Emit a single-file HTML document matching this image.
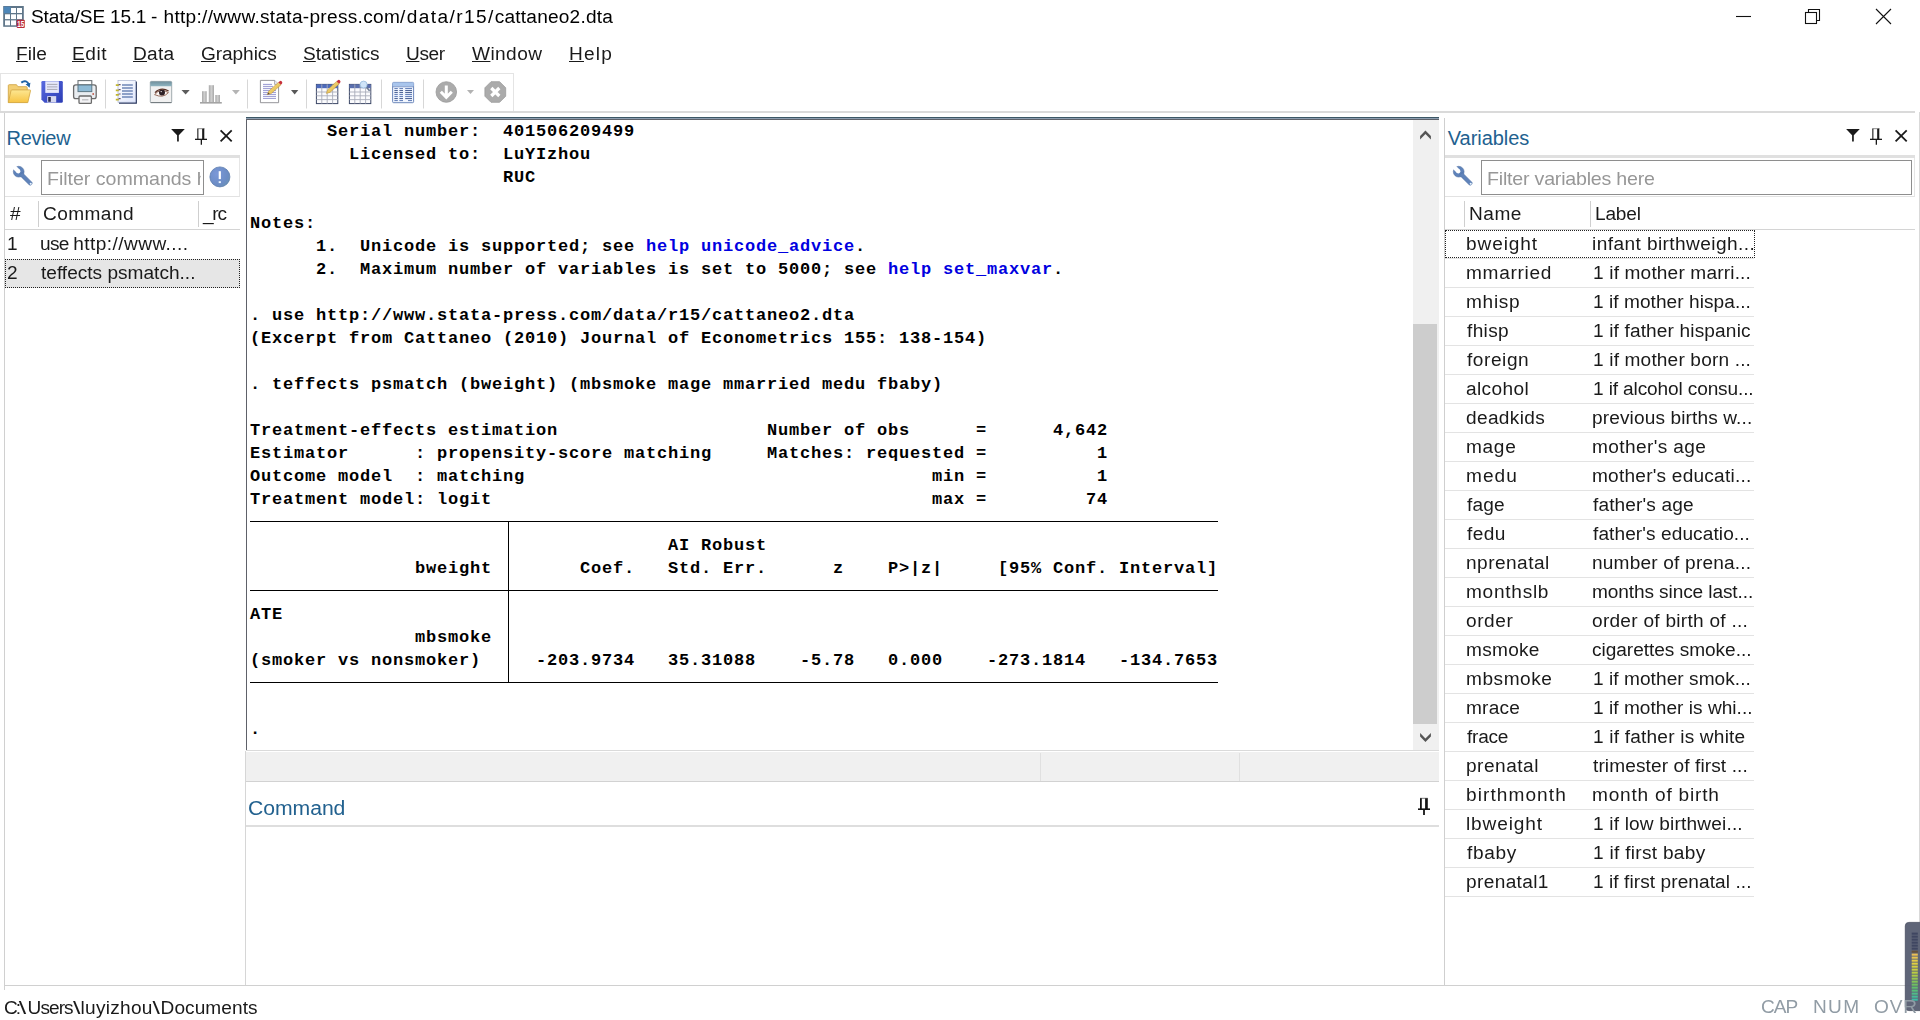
<!DOCTYPE html>
<html lang="en"><head><meta charset="utf-8"><title>Stata/SE 15.1</title>
<style>
html,body{margin:0;padding:0}
body{width:1920px;height:1020px;position:relative;overflow:hidden;background:#fff;font-family:"Liberation Sans",sans-serif;font-size:18px;color:#1a1a1a}
.t{position:absolute;white-space:pre;line-height:24px;height:24px;transform:scaleX(1.06);transform-origin:0 0}
.t u{text-decoration:underline;text-decoration-thickness:1px;text-underline-offset:1px}
.b{position:absolute}
svg{position:absolute;overflow:visible}
#res{position:absolute;left:250px;margin:0;font-family:"Liberation Mono",monospace;line-height:23px;color:#000;white-space:pre;letter-spacing:0}
#res .lk{color:#0000e0}
.hl{position:absolute;background:#000;height:1px}
.vl{position:absolute;background:#000;width:1px}

#res{top:119.5px;font-size:17px;font-weight:bold;letter-spacing:0.798px}
</style></head><body>
<!-- title bar icon -->
<svg id="appicon" style="left:0;top:0" width="30" height="32" viewBox="0 0 30 32">
<rect x="3.200" y="6" width="20.600" height="20.800" fill="#5f7689"/>
<rect x="3.800" y="6.600" width="6.800" height="6.600" fill="#4d86b8"/>
<g fill="#fdfeff"><rect x="11" y="8" width="5" height="5"/><rect x="17" y="8" width="5" height="5"/>
<rect x="5" y="14.300" width="5" height="4.800"/><rect x="11" y="14.300" width="5" height="4.800"/><rect x="17" y="14.300" width="5" height="4.800"/>
<rect x="5" y="20.400" width="5" height="4.900"/><rect x="11" y="20.400" width="5" height="4.900"/></g>
<rect x="16.700" y="19.700" width="8.100" height="8.300" rx="1" fill="#b92a3a"/>
<text x="20.800" y="26.900" font-family="Liberation Sans, sans-serif" font-size="8.500" font-weight="bold" fill="#fff" text-anchor="middle" textLength="7" lengthAdjust="spacingAndGlyphs">15</text>
</svg>
<!-- window controls -->
<svg style="left:1730px;top:0" width="180" height="34" viewBox="1730 0 180 34" fill="none" stroke="#111" stroke-width="1.1">
<path d="M1736 16.5H1751"/>
<rect x="1805.5" y="12.5" width="11" height="11"/><path d="M1808.5 12.5V9.5H1819.5V20.5H1816.5"/>
<path d="M1876 9L1891 24M1891 9L1876 24"/>
</svg>
<!-- toolbar frame -->
<div class="b" style="left:0;top:73px;width:514px;height:38px;border:1px solid #e4e4e4;border-bottom:none;box-sizing:border-box"></div>
<div class="b" style="left:0;top:111px;width:1915px;height:2px;background:#dadada"></div>
<!-- outer frame lines -->
<div class="b" style="left:4px;top:113px;width:1px;height:877px;background:#d0d0d0"></div>
<div class="b" style="left:4px;top:985px;width:1916px;height:1px;background:#d0d0d0"></div>
<div class="b" style="left:1919px;top:112px;width:1px;height:810px;background:#d9d9d9"></div>
<!-- review panel -->
<div class="b" style="left:5px;top:155px;width:235px;height:3px;background:#e0e0e0"></div>
<div class="b" style="left:5px;top:158px;width:235px;height:39px;background:#fff;border-right:1px solid #e6e6e6;border-bottom:1px solid #e2e2e2;box-sizing:border-box"></div>
<div class="b" style="left:41px;top:160px;width:163px;height:35px;background:#fff;border:1px solid #8e8e8e;box-sizing:border-box"></div>
<div class="b" style="left:38px;top:201px;width:1px;height:26px;background:#cfcfcf"></div>
<div class="b" style="left:198px;top:201px;width:1px;height:26px;background:#cfcfcf"></div>
<div class="b" style="left:5px;top:229px;width:235px;height:1px;background:#d4d4d4"></div>
<div class="b" style="left:5px;top:259px;width:235px;height:29px;background:#e6e6e6;border:1px dotted #222;box-sizing:border-box"></div>
<div class="b" style="left:245px;top:751px;width:1px;height:234px;background:#d6d6d6"></div>
<!-- results pane -->
<div class="b" style="left:246px;top:117px;width:1193px;height:1px;background:#3c5766"></div>
<div class="b" style="left:246px;top:118px;width:1193px;height:1px;background:#8c9eb0"></div>
<div class="b" style="left:246px;top:119px;width:1193px;height:1px;background:#5e6169"></div>
<div class="b" style="left:246px;top:119px;width:1px;height:631px;background:#5e6169"></div>
<!-- scrollbar -->
<div class="b" style="left:1413px;top:120px;width:26px;height:630px;background:#f0f0f0"></div>
<div class="b" style="left:1413px;top:324px;width:24px;height:399.500px;background:#cdcdcd"></div>
<svg style="left:1413px;top:120px" width="26" height="630" viewBox="1413 120 26 630">
<path d="M1420.100 139.400L1425.450 134L1430.900 139.400V135.900L1425.450 130.500L1420.100 135.900z" fill="#555"/>
<path d="M1420.100 733L1425.450 738.400L1430.900 733V736.500L1425.450 741.900L1420.100 736.500z" fill="#555"/></svg>
<!-- gray bar -->
<div class="b" style="left:246px;top:750.400px;width:1193px;height:1px;background:#dadada"></div>
<div class="b" style="left:246px;top:752.400px;width:1193px;height:28.600px;background:#f0f0f0"></div>
<div class="b" style="left:246px;top:781px;width:1193px;height:1px;background:#d2d2d2"></div>
<div class="b" style="left:1040px;top:753px;width:1px;height:28px;background:#e0e0e0"></div>
<div class="b" style="left:1239px;top:753px;width:1px;height:28px;background:#e0e0e0"></div>
<!-- command pane -->
<div class="b" style="left:246px;top:825px;width:1193px;height:2px;background:#dedede"></div>
<!-- variables pane -->
<div class="b" style="left:1444px;top:118px;width:1px;height:867px;background:#cfcfcf"></div>
<div class="b" style="left:1445px;top:155px;width:1470px;height:3px;background:#e0e0e0;width:470px"></div>
<div class="b" style="left:1445px;top:158px;width:470px;height:39px;background:#fff;border-right:1px solid #e6e6e6;border-bottom:1px solid #e2e2e2;box-sizing:border-box"></div>
<div class="b" style="left:1481px;top:160px;width:431px;height:35px;background:#fff;border:1px solid #8e8e8e;box-sizing:border-box"></div>
<div class="b" style="left:1464px;top:201px;width:1px;height:26px;background:#cfcfcf"></div>
<div class="b" style="left:1590px;top:201px;width:1px;height:26px;background:#cfcfcf"></div>
<div class="b" style="left:1445px;top:229px;width:470px;height:1px;background:#d4d4d4"></div>
<div class="b" id="vrows" style="left:1445px;top:258px;width:309px;height:639px;background:repeating-linear-gradient(to bottom,#e3e3e3 0,#e3e3e3 1px,transparent 1px,transparent 29px)"></div>
<div class="b" style="left:1445px;top:230px;width:310px;height:28px;border:1px dotted #222;box-sizing:border-box"></div>
<!-- results table rules -->
<div class="hl" style="left:250px;top:521px;width:968px"></div>
<div class="hl" style="left:250px;top:590px;width:968px"></div>
<div class="hl" style="left:250px;top:682px;width:968px"></div>
<div class="vl" style="left:508px;top:521px;height:162px"></div>

<!-- panel header icons -->
<svg style="left:0;top:120px" width="1920" height="80" viewBox="0 120 1920 80">
<defs>
<g id="hdr"><path d="M171.100 129.100H184.800L178.800 135.300V141.600H177.100V135.300z" fill="#1a1a1a"/>
<path d="M197.300 128.700H204.600" stroke="#8a8a8a" stroke-width="1"/>
<path d="M197.850 128.800V139M203.700 128.800V139" stroke="#1a1a1a" fill="none" stroke-width="1.100"/>
<path d="M203.100 128.800V139" stroke="#1a1a1a" stroke-width="1.900"/>
<path d="M195 139.350H207" stroke="#1a1a1a" stroke-width="1.300"/>
<path d="M201.350 140V144.700" stroke="#1a1a1a" stroke-width="1.300"/>
<path d="M220.600 130.300L231.700 141.300M231.700 130.300L220.600 141.300" stroke="#1a1a1a" stroke-width="1.800"/></g>
<g id="wrench"><g transform="translate(18.700 171.700) rotate(-45)"><mask id="mw" maskUnits="userSpaceOnUse" x="-8" y="-8" width="16" height="30"><rect x="-8" y="-8" width="16" height="30" fill="#fff"/><rect x="-2.200" y="-8" width="4.400" height="7.400" fill="#000"/><circle cx="0" cy="-0.600" r="2.200" fill="#000"/></mask><g mask="url(#mw)" fill="#5f83ba" stroke="#4f70a2" stroke-width=".5"><circle cx="0" cy="0" r="5.400"/><path d="M-1.900 3H1.900V17a2.100 2.100 0 0 1 -3.800 0z"/></g><circle cx="0" cy="17" r="1" fill="#e8f4ff"/></g></g>
<radialGradient id="gInfo" cx=".35" cy=".35" r=".8"><stop offset="0" stop-color="#7b98d8"/><stop offset=".7" stop-color="#6b8cc4"/><stop offset="1" stop-color="#6a98ac"/></radialGradient>
</defs>
<use href="#hdr"/><use href="#hdr" x="1675"/>
<use href="#wrench"/><use href="#wrench" x="1440"/>
<circle cx="219.900" cy="176.900" r="10" fill="url(#gInfo)" stroke="#5d7cae" stroke-width=".8"/>
<rect x="218.700" y="171.200" width="2.200" height="7.900" fill="#fff"/><rect x="218.700" y="181.200" width="2.200" height="1.900" fill="#eaf6ff"/>
</svg>

<!-- command pin -->
<svg style="left:1414px;top:794px" width="22" height="24" viewBox="1414 794 22 24">
<path d="M1420 798.300H1427.800" stroke="#777" stroke-width="1"/>
<path d="M1420.900 798.300V809" stroke="#141414" stroke-width="1.800"/><path d="M1426.450 798.300V809" stroke="#141414" stroke-width="2.700"/>
<path d="M1418 809.200H1430" stroke="#141414" stroke-width="1.600"/><path d="M1424 810V814.900" stroke="#141414" stroke-width="1.800"/>
</svg>
<!-- overlay meter widget -->
<svg style="left:1900px;top:918px" width="20" height="96" viewBox="1900 918 20 96">
<rect x="1905.300" y="922.400" width="20" height="88.200" rx="3.500" fill="#555b70" fill-opacity=".94" stroke="#474c5e" stroke-width=".8"/>
<rect x="1911.700" y="932.6" width="6.100" height="2.100" fill="#3f4661"/><rect x="1911.700" y="935.6" width="6.100" height="2.100" fill="#3f4661"/><rect x="1911.700" y="938.6" width="6.100" height="2.100" fill="#3f4661"/><rect x="1911.700" y="941.6" width="6.100" height="2.100" fill="#3f4661"/><rect x="1911.700" y="944.6" width="6.100" height="2.100" fill="#3f4661"/><rect x="1911.700" y="947.6" width="6.100" height="2.100" fill="#3f4661"/><rect x="1911.700" y="950.6" width="6.100" height="2.100" fill="#66503a"/><rect x="1911.700" y="953.6" width="6.100" height="2.100" fill="#ecbe54"/><rect x="1911.700" y="956.6" width="6.100" height="2.100" fill="#e8c44d"/><rect x="1911.700" y="959.6" width="6.100" height="2.100" fill="#e4ca47"/><rect x="1911.700" y="962.6" width="6.100" height="2.100" fill="#e0d040"/><rect x="1911.700" y="965.6" width="6.100" height="2.100" fill="#d3cf41"/><rect x="1911.700" y="968.6" width="6.100" height="2.100" fill="#c6ce42"/><rect x="1911.700" y="971.6" width="6.100" height="2.100" fill="#bacd43"/><rect x="1911.700" y="974.6" width="6.100" height="2.100" fill="#abcb46"/><rect x="1911.700" y="977.6" width="6.100" height="2.100" fill="#97c74f"/><rect x="1911.700" y="980.6" width="6.100" height="2.100" fill="#82c457"/><rect x="1911.700" y="983.6" width="6.100" height="2.100" fill="#6ec060"/><rect x="1911.700" y="986.6" width="6.100" height="2.100" fill="#60be6b"/><rect x="1911.700" y="989.6" width="6.100" height="2.100" fill="#57bd79"/><rect x="1911.700" y="992.6" width="6.100" height="2.100" fill="#4fbc88"/><rect x="1911.700" y="995.6" width="6.100" height="2.100" fill="#46bb96"/><rect x="1911.700" y="998.6" width="6.100" height="2.100" fill="#3ebaa4"/>
</svg>

<!-- toolbar icons -->
<svg id="tb" style="left:0;top:73px" width="515" height="39" viewBox="0 73 515 39">
<defs>
<linearGradient id="gFold" x1="0" y1="0" x2="0" y2="1"><stop offset="0" stop-color="#fde792"/><stop offset="1" stop-color="#f7c444"/></linearGradient>
<linearGradient id="gFlop" x1="0" y1="0" x2="1" y2="1"><stop offset="0" stop-color="#5a6be0"/><stop offset="1" stop-color="#2a3bb4"/></linearGradient>
<linearGradient id="gBar" x1="0" y1="0" x2="1" y2="0"><stop offset="0" stop-color="#a8a8a8"/><stop offset="0.5" stop-color="#cfcfcf"/><stop offset="1" stop-color="#a8a8a8"/></linearGradient>
<linearGradient id="gPage" x1="0" y1="0" x2="1" y2="1"><stop offset="0" stop-color="#ffffff"/><stop offset="1" stop-color="#dfe6fb"/></linearGradient>
<linearGradient id="gTeal" x1="0" y1="0" x2="0" y2="1"><stop offset="0" stop-color="#6f8f9c"/><stop offset="1" stop-color="#8fb4c0"/></linearGradient>
<linearGradient id="gPen" x1="0" y1="0" x2="1" y2="1"><stop offset="0" stop-color="#f7e48a"/><stop offset="1" stop-color="#e0b040"/></linearGradient>
</defs>
<!-- open folder -->
<path d="M8.3 102.5V85.6q0-.9.9-.9h7.3l1.4 2h8.4q.9 0 .9.9V102.5z" fill="#f3cf74" stroke="#d2a748" stroke-width=".9"/>
<path d="M8.4 102.6L11 90.6q.2-.7 1-.7H29.8q.9 0 .7.8L27.8 102.6z" fill="url(#gFold)" stroke="#d6ab4a" stroke-width=".9"/>
<path d="M21.3 82.6C24.5 80 28 81.2 28.6 84.6" fill="none" stroke="#1f62a6" stroke-width="2"/>
<path d="M25.6 84.2L30.4 82.8L29.6 87.8z" fill="#1f62a6"/>
<!-- save -->
<path d="M41.4 82.2q0-1.2 1.2-1.2H61.6q1.2 0 1.2 1.2V101.5q0 1.2-1.2 1.2H44.6L41.4 99.6z" fill="url(#gFlop)"/>
<rect x="45.3" y="81.3" width="13.6" height="11.6" fill="#e6e8fb"/>
<path d="M47 84.4H57.4M47 86.9H57.4M47 89.4H57.4" stroke="#a9a9b4" stroke-width="1"/>
<rect x="47.2" y="96.1" width="9" height="6.4" fill="#d6d8f0"/>
<rect x="48.2" y="97" width="2.6" height="4.8" fill="#2a2c50"/>
<!-- print -->
<rect x="78" y="80.6" width="13.8" height="11" fill="#fff" stroke="#6e7478" stroke-width="1.1"/>
<rect x="73.6" y="84.8" width="22.6" height="13.8" rx="2.2" fill="#e9edf1" stroke="#6b6b6b" stroke-width="1.3"/>
<rect x="78" y="85" width="13.8" height="6.6" fill="#8fbbd6" stroke="#5d7886" stroke-width="1"/>
<rect x="79" y="96" width="12.4" height="7.4" rx="1" fill="#f3f3f5" stroke="#6b6b6b" stroke-width="1.3"/>
<path d="M82 99.8H88.4" stroke="#b9b9bd" stroke-width="1.2"/>
<circle cx="93.2" cy="94" r=".9" fill="#c05a4a"/>
<!-- sep -->
<path d="M105.5 79.5V108.5M247.5 79.5V108.5M306.5 79.5V108.5M381.5 79.5V108.5M423.5 79.5V108.5" stroke="#d7d7d7" stroke-width="1"/>
<!-- log notebook -->
<path d="M119 103.7H136.9V81.4H135.6V102.2H119z" fill="#28365e"/>
<rect x="118" y="80.4" width="17.6" height="21.8" fill="url(#gPage)" stroke="#9aa6c6" stroke-width=".6"/>
<path d="M122 85H132.8M122 88H132.8M122 91H132.8M122 94H132.8M122 97H132.8" stroke="#6f86b6" stroke-width="1.5"/>
<path d="M115.8 85.2H118.8M115.8 90.4H118.8M115.8 94.8H118.8M115.8 99.6H118.8" stroke="#c2b62c" stroke-width="1.8"/>
<path d="M118.6 84.6H120.6M118.6 89.6H120.6M118.6 94H120.6M118.6 98.6H120.6" stroke="#6a5870" stroke-width="1.2"/>
<!-- viewer -->
<rect x="150.3" y="81.4" width="21.4" height="21.2" rx="1" fill="#f1f1f1" stroke="#8a979c" stroke-width=".8"/>
<path d="M150.3 86.2V82.4q0-1 1-1H170.7q1 0 1 1V86.2z" fill="url(#gTeal)"/>
<path d="M150.6 102.6H171.6" stroke="#70787c" stroke-width="1"/>
<path d="M154.6 94.6Q160.6 87.4 168.4 92.6Q163 98.6 154.6 94.6z" fill="#fbf6f3" stroke="#8a5a48" stroke-width=".9"/>
<circle cx="162" cy="92.6" r="3" fill="#2e2228"/>
<path d="M155 92.6Q161 86.6 168.6 91" fill="none" stroke="#5a3226" stroke-width="1.3"/>
<circle cx="161.2" cy="91.6" r=".7" fill="#fff"/>
<path d="M181.5 90H189.7L185.6 94.5z" fill="#5c5c5c"/>
<!-- graph (disabled) -->
<rect x="202" y="91.2" width="4.7" height="11" fill="url(#gBar)"/>
<rect x="208.8" y="85.2" width="5.2" height="17" fill="url(#gBar)"/>
<rect x="215.3" y="95" width="4.7" height="7.2" fill="url(#gBar)"/>
<rect x="200" y="102" width="21.8" height="1.6" fill="#a4a4a4"/>
<path d="M232 90H239.8L235.9 94.5z" fill="#b4b4b4"/>
<!-- do-file editor -->
<path d="M260.4 80.4H274.6L278.6 84.4V102.7H260.4z" fill="#fff" stroke="#8a8a8e" stroke-width=".9"/>
<path d="M274.6 80.4V84.4H278.6" fill="#eef" stroke="#8a8a8e" stroke-width=".7"/>
<path d="M263 84.4H272M263 86.4H273M263 88.4H276M263 90.4H276M263 92.4H276M263 94.4H276M263 96.4H276M263 98.4H276" stroke="#8c8ccc" stroke-width=".9"/>
<path d="M278.4 82.4L281 84.8L271.2 93.6L267.4 94.6L268.8 91z" fill="url(#gPen)" stroke="#b88a30" stroke-width=".5"/>
<path d="M278.4 82.4L279.6 81.2q1.200-.8 2.200.2q1 1.200.2 2.200L281 84.800z" fill="#c8303c"/>
<path d="M267.400 94.600L268.200 92.400L269.800 93.900z" fill="#5a4a30"/>
<path d="M291 90H298.300L294.650 94.500z" fill="#585858"/>
<!-- data editor (edit) -->
<rect x="316.400" y="84.400" width="21.400" height="19.200" fill="#fbfbfd" stroke="#3c4866" stroke-width="1"/>
<rect x="316.400" y="84.400" width="21.400" height="3.800" fill="#4c6abc"/>
<path d="M316.400 92H337.800M316.400 95.800H337.800M316.400 99.600H337.800M321.800 84.400V103.600M327.200 84.400V103.600M332.600 84.400V103.600" stroke="#a9adba" stroke-width=".9"/>
<path d="M336.600 81.400L339.200 83.800L330 92.400L326.400 93.400L327.600 89.800z" fill="url(#gPen)" stroke="#b88a30" stroke-width=".5"/>
<path d="M336.600 81.400L337.800 80.200q1.200-.8 2.200.2q1 1.200.2 2.200L339.200 83.800z" fill="#c8303c"/>
<!-- data editor (browse) -->
<rect x="349.400" y="84.400" width="21.400" height="19.200" fill="#fbfbfd" stroke="#3c4866" stroke-width="1"/>
<rect x="349.400" y="84.400" width="21.400" height="3.800" fill="#5a6fae"/>
<path d="M349.400 92H370.800M349.400 95.800H370.800M349.400 99.600H370.800M354.800 84.400V103.600M360.200 84.400V103.600M365.600 84.400V103.600" stroke="#a9adba" stroke-width=".9"/>
<path d="M366.200 87L369.600 90.800" stroke="#6a7890" stroke-width="1.600"/>
<circle cx="363.600" cy="84.600" r="3.500" fill="#cfe4f8" stroke="#9ec0de" stroke-width=".9"/>
<!-- variables manager -->
<rect x="392.600" y="82.400" width="21" height="20.300" rx="1" fill="#f2f7ff" stroke="#5d7ab2" stroke-width=".9"/>
<path d="M392.600 86.600V83.400q0-1 1-1H412.600q1 0 1 1V86.600z" fill="#a9c5ec"/>
<path d="M392.600 86.800H413.600" stroke="#5d7ab2" stroke-width=".7"/>
<g stroke="#5b78b4" stroke-width="1"><path d="M394.400 88.600H397.800M399.400 88.600H403M405.200 88.600H412"/><path d="M394.400 90.600H397.800M399.400 90.600H403M405.200 90.600H412" stroke="#3f588e"/><path d="M394.400 92.600H397.800M399.400 92.600H403M405.200 92.600H412" stroke="#3f588e"/><path d="M394.400 94.600H397.800M399.400 94.600H403M405.200 94.600H412"/><path d="M394.400 96.600H397.800M399.400 96.600H403M405.200 96.600H412"/><path d="M394.400 98.600H397.800M399.400 98.600H403M405.200 98.600H412" stroke="#3f588e"/><path d="M394.400 100.600H397.800M399.400 100.600H403M408 100.600H412"/></g>
<!-- more -->
<circle cx="446.300" cy="92" r="10.300" fill="#ababab" stroke="#9c9c9c" stroke-width=".8"/>
<path d="M446.300 85.500V96.500M440.800 91.800L446.300 97.400L451.800 91.800" fill="none" stroke="#fff" stroke-width="3" stroke-linejoin="miter"/>
<path d="M467 90H474L470.500 93.900z" fill="#b2b2b2"/>
<!-- break -->
<path d="M491 81.700H499.600L505.700 87.800V96.200L499.600 102.300H491L484.900 96.200V87.800z" fill="#ababab" stroke="#9c9c9c" stroke-width=".8"/>
<path d="M491.300 88L499.300 96M499.300 88L491.300 96" stroke="#fff" stroke-width="3.200"/>
</svg>

<pre id="res">       Serial number:  401506209499
         Licensed to:  LuYIzhou
                       RUC

Notes:
      1.  Unicode is supported; see <span class="lk">help unicode_advice</span>.
      2.  Maximum number of variables is set to 5000; see <span class="lk">help set_maxvar</span>.

. use http://www.stata-press.com/data/r15/cattaneo2.dta
(Excerpt from Cattaneo (2010) Journal of Econometrics 155: 138-154)

. teffects psmatch (bweight) (mbsmoke mage mmarried medu fbaby)

Treatment-effects estimation                   Number of obs      =      4,642
Estimator      : propensity-score matching     Matches: requested =          1
Outcome model  : matching                                     min =          1
Treatment model: logit                                        max =         74

                                      AI Robust
               bweight        Coef.   Std. Err.      z    P&gt;|z|     [95% Conf. Interval]

ATE
               mbsmoke
(smoker vs nonsmoker)     -203.9734   35.31088    -5.78   0.000    -273.1814   -134.7653


.</pre>
<div class="t" id="title" style="left:30.64px;top:4.76px;font-size:18px;color:#000;"><span style="letter-spacing:-0.158px">Stata/SE </span><span style="letter-spacing:-0.292px">15.1 </span><span style="letter-spacing:0.396px">- </span><span style="letter-spacing:0.274px">http://www.stata-press.com</span><span style="letter-spacing:1.328px">/data/r15/</span><span style="letter-spacing:0.186px">cattaneo2.dta</span></div>
<div class="t" id="m_File" style="left:15.64px;top:42.26px;font-size:18px;color:#1a1a1a;letter-spacing:0.057px;"><u>F</u>ile</div>
<div class="t" id="m_Edit" style="left:72.24px;top:42.26px;font-size:18px;color:#1a1a1a;letter-spacing:0.503px;"><u>E</u>dit</div>
<div class="t" id="m_Data" style="left:133.14px;top:42.26px;font-size:18px;color:#1a1a1a;letter-spacing:0.245px;"><u>D</u>ata</div>
<div class="t" id="m_Graphics" style="left:200.94px;top:42.26px;font-size:18px;color:#1a1a1a;letter-spacing:-0.075px;"><u>G</u>raphics</div>
<div class="t" id="m_Statistics" style="left:303.44px;top:42.26px;font-size:18px;color:#1a1a1a;letter-spacing:0.025px;"><u>S</u>tatistics</div>
<div class="t" id="m_User" style="left:405.84px;top:42.26px;font-size:18px;color:#1a1a1a;letter-spacing:-0.352px;"><u>U</u>ser</div>
<div class="t" id="m_Window" style="left:472.40px;top:42.26px;font-size:18px;color:#1a1a1a;letter-spacing:0.389px;"><u>W</u>indow</div>
<div class="t" id="m_Help" style="left:568.74px;top:42.26px;font-size:18px;color:#1a1a1a;letter-spacing:1.132px;"><u>H</u>elp</div>
<div class="t" id="review" style="left:6.50px;top:125.57px;font-size:20px;color:#22618f;letter-spacing:-0.300px;transform:scaleX(1.0);">Review</div>
<div class="t" id="variables" style="left:1447.80px;top:125.67px;font-size:20px;color:#22618f;letter-spacing:-0.050px;transform:scaleX(1.0);">Variables</div>
<div class="t" id="command" style="left:247.69px;top:795.82px;font-size:20px;color:#22618f;letter-spacing:-0.063px;">Command</div>
<div class="t" id="fcmd" style="left:47.14px;top:167.09px;font-size:18.5px;color:#979797;letter-spacing:-0.034px;width:144.81px;overflow:hidden;">Filter commands here</div>
<div class="t" id="fvar" style="left:1486.94px;top:167.29px;font-size:18.5px;color:#979797;letter-spacing:-0.201px;">Filter variables here</div>
<div class="t" id="h_hash" style="left:10.40px;top:202.06px;font-size:18px;color:#1a1a1a;letter-spacing:0.226px;">#</div>
<div class="t" id="h_cmd" style="left:42.54px;top:202.06px;font-size:18px;color:#1a1a1a;letter-spacing:0.399px;">Command</div>
<div class="t" id="h_rc" style="left:203.00px;top:202.06px;font-size:18px;color:#1a1a1a;letter-spacing:-1.179px;">_rc</div>
<div class="t" id="h_name" style="left:1469.24px;top:202.06px;font-size:18px;color:#1a1a1a;letter-spacing:0.484px;">Name</div>
<div class="t" id="h_label" style="left:1595.24px;top:202.06px;font-size:18px;color:#1a1a1a;letter-spacing:-0.193px;">Label</div>
<div class="t" id="r1n" style="left:7.44px;top:231.56px;font-size:18px;color:#1a1a1a;letter-spacing:0.226px;">1</div>
<div class="t" id="r1t" style="left:39.94px;top:231.56px;font-size:18px;color:#1a1a1a;"><span style="letter-spacing:-0.678px">use </span><span style="letter-spacing:0.409px">http://www....</span></div>
<div class="t" id="r2n" style="left:6.94px;top:260.56px;font-size:18px;color:#1a1a1a;letter-spacing:0.226px;">2</div>
<div class="t" id="r2t" style="left:41.00px;top:260.56px;font-size:18px;color:#1a1a1a;letter-spacing:-0.002px;">teffects psmatch...</div>
<div class="t" id="vn0" style="left:1465.64px;top:231.56px;font-size:18px;color:#1a1a1a;letter-spacing:0.840px;">bweight</div>
<div class="t" id="vl0" style="left:1591.64px;top:231.56px;font-size:18px;color:#1a1a1a;letter-spacing:0.395px;">infant birthweigh...</div>
<div class="t" id="vn1" style="left:1465.64px;top:260.56px;font-size:18px;color:#1a1a1a;letter-spacing:0.655px;">mmarried</div>
<div class="t" id="vl1" style="left:1593.24px;top:260.56px;font-size:18px;color:#1a1a1a;letter-spacing:0.152px;">1 if mother marri...</div>
<div class="t" id="vn2" style="left:1465.64px;top:289.56px;font-size:18px;color:#1a1a1a;letter-spacing:0.670px;">mhisp</div>
<div class="t" id="vl2" style="left:1593.24px;top:289.56px;font-size:18px;color:#1a1a1a;letter-spacing:0.047px;">1 if mother hispa...</div>
<div class="t" id="vn3" style="left:1466.70px;top:318.56px;font-size:18px;color:#1a1a1a;letter-spacing:0.325px;">fhisp</div>
<div class="t" id="vl3" style="left:1593.24px;top:318.56px;font-size:18px;color:#1a1a1a;letter-spacing:0.134px;">1 if father hispanic</div>
<div class="t" id="vn4" style="left:1466.70px;top:347.56px;font-size:18px;color:#1a1a1a;letter-spacing:0.528px;">foreign</div>
<div class="t" id="vl4" style="left:1593.24px;top:347.56px;font-size:18px;color:#1a1a1a;letter-spacing:0.152px;">1 if mother born ...</div>
<div class="t" id="vn5" style="left:1465.64px;top:376.56px;font-size:18px;color:#1a1a1a;letter-spacing:0.362px;">alcohol</div>
<div class="t" id="vl5" style="left:1593.24px;top:376.56px;font-size:18px;color:#1a1a1a;letter-spacing:-0.128px;">1 if alcohol consu...</div>
<div class="t" id="vn6" style="left:1465.64px;top:405.56px;font-size:18px;color:#1a1a1a;letter-spacing:0.315px;">deadkids</div>
<div class="t" id="vl6" style="left:1591.64px;top:405.56px;font-size:18px;color:#1a1a1a;letter-spacing:0.108px;">previous births w...</div>
<div class="t" id="vn7" style="left:1465.64px;top:434.56px;font-size:18px;color:#1a1a1a;letter-spacing:0.635px;">mage</div>
<div class="t" id="vl7" style="left:1591.64px;top:434.56px;font-size:18px;color:#1a1a1a;letter-spacing:0.358px;">mother's age</div>
<div class="t" id="vn8" style="left:1465.64px;top:463.56px;font-size:18px;color:#1a1a1a;letter-spacing:0.950px;">medu</div>
<div class="t" id="vl8" style="left:1591.64px;top:463.56px;font-size:18px;color:#1a1a1a;letter-spacing:0.208px;">mother's educati...</div>
<div class="t" id="vn9" style="left:1466.70px;top:492.56px;font-size:18px;color:#1a1a1a;letter-spacing:0.176px;">fage</div>
<div class="t" id="vl9" style="left:1592.70px;top:492.56px;font-size:18px;color:#1a1a1a;letter-spacing:0.122px;">father's age</div>
<div class="t" id="vn10" style="left:1466.70px;top:521.56px;font-size:18px;color:#1a1a1a;letter-spacing:0.396px;">fedu</div>
<div class="t" id="vl10" style="left:1592.70px;top:521.56px;font-size:18px;color:#1a1a1a;letter-spacing:0.079px;">father's educatio...</div>
<div class="t" id="vn11" style="left:1465.64px;top:550.56px;font-size:18px;color:#1a1a1a;letter-spacing:0.427px;">nprenatal</div>
<div class="t" id="vl11" style="left:1591.64px;top:550.56px;font-size:18px;color:#1a1a1a;letter-spacing:0.178px;">number of prena...</div>
<div class="t" id="vn12" style="left:1465.64px;top:579.56px;font-size:18px;color:#1a1a1a;letter-spacing:0.679px;">monthslb</div>
<div class="t" id="vl12" style="left:1591.64px;top:579.56px;font-size:18px;color:#1a1a1a;letter-spacing:-0.105px;">months since last...</div>
<div class="t" id="vn13" style="left:1465.64px;top:608.56px;font-size:18px;color:#1a1a1a;letter-spacing:0.528px;">order</div>
<div class="t" id="vl13" style="left:1591.64px;top:608.56px;font-size:18px;color:#1a1a1a;letter-spacing:0.250px;">order of birth of ...</div>
<div class="t" id="vn14" style="left:1465.64px;top:637.56px;font-size:18px;color:#1a1a1a;letter-spacing:0.253px;">msmoke</div>
<div class="t" id="vl14" style="left:1591.64px;top:637.56px;font-size:18px;color:#1a1a1a;letter-spacing:-0.034px;">cigarettes smoke...</div>
<div class="t" id="vn15" style="left:1465.64px;top:666.56px;font-size:18px;color:#1a1a1a;letter-spacing:0.509px;">mbsmoke</div>
<div class="t" id="vl15" style="left:1593.24px;top:666.56px;font-size:18px;color:#1a1a1a;letter-spacing:0.049px;">1 if mother smok...</div>
<div class="t" id="vn16" style="left:1465.64px;top:695.56px;font-size:18px;color:#1a1a1a;letter-spacing:0.193px;">mrace</div>
<div class="t" id="vl16" style="left:1593.24px;top:695.56px;font-size:18px;color:#1a1a1a;letter-spacing:0.025px;">1 if mother is whi...</div>
<div class="t" id="vn17" style="left:1466.70px;top:724.56px;font-size:18px;color:#1a1a1a;letter-spacing:-0.245px;">frace</div>
<div class="t" id="vl17" style="left:1593.24px;top:724.56px;font-size:18px;color:#1a1a1a;letter-spacing:0.185px;">1 if father is white</div>
<div class="t" id="vn18" style="left:1465.64px;top:753.56px;font-size:18px;color:#1a1a1a;letter-spacing:0.474px;">prenatal</div>
<div class="t" id="vl18" style="left:1592.70px;top:753.56px;font-size:18px;color:#1a1a1a;letter-spacing:0.095px;">trimester of first ...</div>
<div class="t" id="vn19" style="left:1465.64px;top:782.56px;font-size:18px;color:#1a1a1a;letter-spacing:1.008px;">birthmonth</div>
<div class="t" id="vl19" style="left:1591.64px;top:782.56px;font-size:18px;color:#1a1a1a;letter-spacing:0.742px;">month of birth</div>
<div class="t" id="vn20" style="left:1465.64px;top:811.56px;font-size:18px;color:#1a1a1a;letter-spacing:0.822px;">lbweight</div>
<div class="t" id="vl20" style="left:1593.24px;top:811.56px;font-size:18px;color:#1a1a1a;letter-spacing:0.166px;">1 if low birthwei...</div>
<div class="t" id="vn21" style="left:1466.70px;top:840.56px;font-size:18px;color:#1a1a1a;letter-spacing:0.627px;">fbaby</div>
<div class="t" id="vl21" style="left:1593.24px;top:840.56px;font-size:18px;color:#1a1a1a;letter-spacing:0.272px;">1 if first baby</div>
<div class="t" id="vn22" style="left:1465.64px;top:869.56px;font-size:18px;color:#1a1a1a;letter-spacing:0.344px;">prenatal1</div>
<div class="t" id="vl22" style="left:1593.24px;top:869.56px;font-size:18px;color:#1a1a1a;letter-spacing:0.066px;">1 if first prenatal ...</div>
<div class="t" id="status" style="left:4.34px;top:996.06px;font-size:18px;color:#1a1a1a;"><span style="letter-spacing:-1.830px">C:</span><span style="letter-spacing:2.909px;display:inline-block;transform:scaleX(1.4);transform-origin:0 50%">\</span><span style="letter-spacing:-0.894px">Users</span><span style="letter-spacing:2.437px;display:inline-block;transform:scaleX(1.4);transform-origin:0 50%">\</span><span style="letter-spacing:0.246px">luyizhou</span><span style="letter-spacing:2.437px;display:inline-block;transform:scaleX(1.4);transform-origin:0 50%">\</span><span style="letter-spacing:0.051px">Documents</span></div>
<div class="t" id="cap" style="left:1761.44px;top:995.26px;font-size:18px;color:#919ca5;letter-spacing:-0.991px;">CAP</div>
<div class="t" id="num" style="left:1812.94px;top:995.26px;font-size:18px;color:#919ca5;letter-spacing:1.255px;">NUM</div>
<div class="t" id="ovr" style="left:1873.94px;top:995.26px;font-size:18px;color:#919ca5;letter-spacing:0.840px;">OVR</div>
</body></html>
